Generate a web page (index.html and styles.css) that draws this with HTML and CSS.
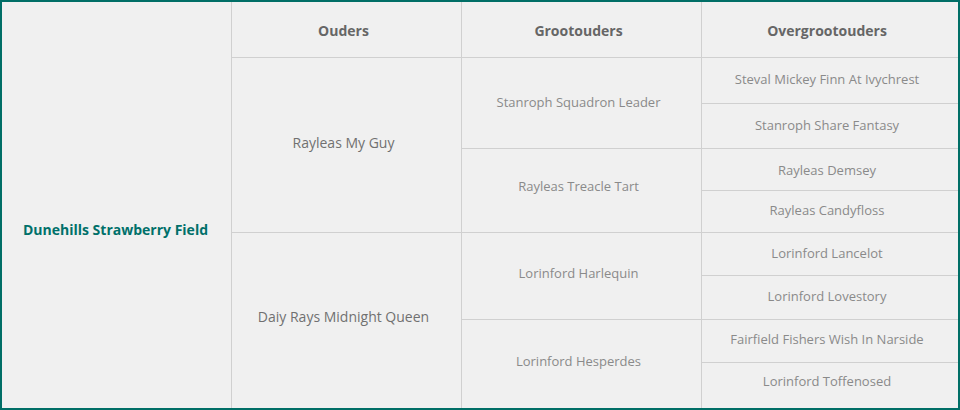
FILE: index.html
```html
<!DOCTYPE html>
<html lang="nl">
<head>
<meta charset="utf-8">
<title>Stamboom</title>
<link rel="stylesheet" href="styles.css">
</head>
<body>
<table class="pedigree">
  <tbody>
    <tr class="head-row">
      <th class="corner"></th>
      <th class="col-head col-parent">Ouders</th>
      <th class="col-head col-grand">Grootouders</th>
      <th class="col-head col-great">Overgrootouders</th>
    </tr>
    <tr class="r1">
      <th class="self-cell" rowspan="8"><span class="self-name">Dunehills Strawberry Field</span></th>
      <td class="parent lift-3" rowspan="4">Rayleas My Guy</td>
      <td rowspan="2">Stanroph Squadron Leader</td>
      <td>Steval Mickey Finn At Ivychrest</td>
    </tr>
    <tr class="r2"><td>Stanroph Share Fantasy</td></tr>
    <tr class="r3">
      <td class="lift-5" rowspan="2">Rayleas Treacle Tart</td>
      <td class="lift-0">Rayleas Demsey</td>
    </tr>
    <tr class="r4"><td class="lift-2">Rayleas Candyfloss</td></tr>
    <tr class="r5">
      <td class="parent lift-4" rowspan="4">Daiy Rays Midnight Queen</td>
      <td class="lift-3" rowspan="2">Lorinford Harlequin</td>
      <td>Lorinford Lancelot</td>
    </tr>
    <tr class="r6"><td>Lorinford Lovestory</td></tr>
    <tr class="r7">
      <td class="lift-3" rowspan="2">Lorinford Hesperdes</td>
      <td class="lift-2">Fairfield Fishers Wish In Narside</td>
    </tr>
    <tr class="r8"><td class="lift-5">Lorinford Toffenosed</td></tr>
  </tbody>
</table>
</body>
</html>
```

FILE: styles.css
```css
html, body {
  margin: 0;
  padding: 0;
  background: #f0f0f0;
}

.pedigree {
  width: 960px;
  height: 410px;
  border-collapse: collapse;
  border: 2px solid #006e66;
  background: #f0f0f0;
  font-family: "Open Sans", "Liberation Sans", sans-serif;
  table-layout: fixed;
}

.pedigree th,
.pedigree td {
  border: 1px solid #d0d0d0;
  text-align: center;
  vertical-align: middle;
  padding: 0 6px 2px 0;
}

.pedigree .corner {
  width: 227px;
  padding: 0 2px 0 0;
  border-bottom: none;
}

.pedigree .self-cell {
  padding: 0 2px 8px 0;
  border-top: none;
}

.self-name {
  color: #00706a;
  font-size: 14px;
  font-weight: 700;
}

.pedigree .col-head {
  color: #666666;
  font-size: 14px;
  font-weight: 700;
  height: 53px;
  padding: 2px 6px 0 0;
}

.col-parent { width: 223px; }
.col-grand { width: 233px; }

.pedigree td {
  color: #8a8a8a;
  font-size: 13px;
}

.pedigree td.parent {
  color: #707070;
  font-size: 14px;
}

.pedigree td.lift-0 { padding-bottom: 0; }
.pedigree td.lift-2 { padding-bottom: 4px; }
.pedigree td.lift-3 { padding-bottom: 6px; }
.pedigree td.lift-4 { padding-bottom: 8px; }
.pedigree td.lift-5 { padding-bottom: 10px; }

.r1 { height: 45px; }
.r2 { height: 45px; }
.r3 { height: 42px; }
.r4 { height: 42px; }
.r5 { height: 42px; }
.r6 { height: 44px; }
.r7 { height: 43px; }
.r8 { height: 46px; }
```
